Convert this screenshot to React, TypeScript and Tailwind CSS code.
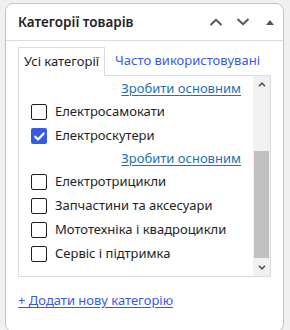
import React from "react";

interface Item {
  label: string;
  checked?: boolean;
  primaryLink?: boolean;
}

// visible part of the category list (scrolled to the bottom)
const ITEMS: Item[] = [
  { label: "Електросамокати" },
  { label: "Електроскутери", checked: true, primaryLink: true },
  { label: "Електротрицикли" },
  { label: "Запчастини та аксесуари" },
  { label: "Мототехніка і квадроцикли" },
  { label: "Сервіс і підтримка" },
];

const PrimaryLink = () => (
  <div className="flex h-[22px] items-center justify-end">
    <a className="text-[13px] text-[#2271b1] underline underline-offset-2 decoration-1">
      Зробити основним
    </a>
  </div>
);

const Checkbox = ({ checked }: { checked?: boolean }) =>
  checked ? (
    <span className="flex h-4 w-4 flex-shrink-0 items-center justify-center rounded-[2px] bg-[#3858e9]">
      <svg viewBox="0 0 16 16" className="h-[13px] w-[13px]" fill="none">
        <path d="M2.8 8.4l3.4 3.2L13.2 4.4" stroke="#fff" strokeWidth="2.8" strokeLinecap="round" strokeLinejoin="round" />
      </svg>
    </span>
  ) : (
    <span className="h-4 w-4 flex-shrink-0 rounded-[2px] border border-[#1e1e1e] bg-white" />
  );

export default function App() {
  return (
    <div className="min-h-[330px] w-[290px] bg-[#f0f0f1] pl-[5px] pr-[6px] pt-[3px] font-['Noto_Sans','Open_Sans',sans-serif]">
      <div className="rounded-lg border border-[#c3c4c7] bg-white">
        {/* header */}
        <div className="flex h-[37px] items-center border-b border-[#dcdcde] pl-3 pr-2">
          <h2 className="flex-1 text-[13.5px] font-semibold text-[#1d2327]">Категорії товарів</h2>
          <div className="flex items-center gap-[13px] text-[#50575e]">
            <svg viewBox="0 0 14 8" className="h-2 w-[14px]" fill="none">
              <path d="M1.5 7L7 1.8 12.5 7" stroke="currentColor" strokeWidth="2" />
            </svg>
            <svg viewBox="0 0 14 8" className="h-2 w-[14px]" fill="none">
              <path d="M1.5 1L7 6.2 12.5 1" stroke="currentColor" strokeWidth="2" />
            </svg>
            <svg viewBox="0 0 10 6" className="ml-0.5 h-[6px] w-[10px]" fill="currentColor">
              <path d="M1 6L5 1l4 5z" />
            </svg>
          </div>
        </div>

        {/* body */}
        <div className="px-3 pb-[20px] pt-[6px]">
          <div className="flex items-end whitespace-nowrap">
            <div className="relative -mb-px h-[29px] border border-b-0 border-[#dcdcde] bg-white px-[5px] pt-[4px] text-[13px] text-[#1e1e1e]">
              Усі категорії
            </div>
            <a className="ml-[5px] h-[28px] px-[5px] pt-[4px] text-[13px] text-[#3858e9]">
              Часто використовувані
            </a>
          </div>

          <div className="flex h-[202px] border border-[#dcdcde] bg-white">
            <div className="flex-1 overflow-hidden pl-3 pr-3 pt-[2px]">
              {ITEMS.map((item, index) => (
                <React.Fragment key={item.label}>
                  {index === 0 && <PrimaryLink />}
                  <label className="flex h-6 items-center gap-2 text-[13px] text-[#1e1e1e]">
                    <Checkbox checked={item.checked} />
                    <span>{item.label}</span>
                  </label>
                  {item.primaryLink && <PrimaryLink />}
                </React.Fragment>
              ))}
            </div>

            {/* scrollbar */}
            <div className="flex w-[17px] flex-col bg-[#f1f1f1]">
              <div className="flex h-[17px] items-center justify-center">
                <svg viewBox="0 0 8 5" className="h-[5px] w-2" fill="none">
                  <path d="M1 4.2L4 1.2l3 3" stroke="#505050" strokeWidth="1.6" />
                </svg>
              </div>
              <div className="flex flex-1 flex-col justify-end">
                <div className="mx-px mb-px h-[107px] bg-[#c1c1c1]" />
              </div>
              <div className="flex h-[17px] items-center justify-center">
                <svg viewBox="0 0 8 5" className="h-[5px] w-2" fill="none">
                  <path d="M1 0.8L4 3.8l3-3" stroke="#505050" strokeWidth="1.6" />
                </svg>
              </div>
            </div>
          </div>

          <div className="mt-[10px]">
            <a className="text-[13px] text-[#3858e9] underline underline-offset-2 decoration-1">
              + Додати нову категорію
            </a>
          </div>
        </div>
      </div>
    </div>
  );
}
